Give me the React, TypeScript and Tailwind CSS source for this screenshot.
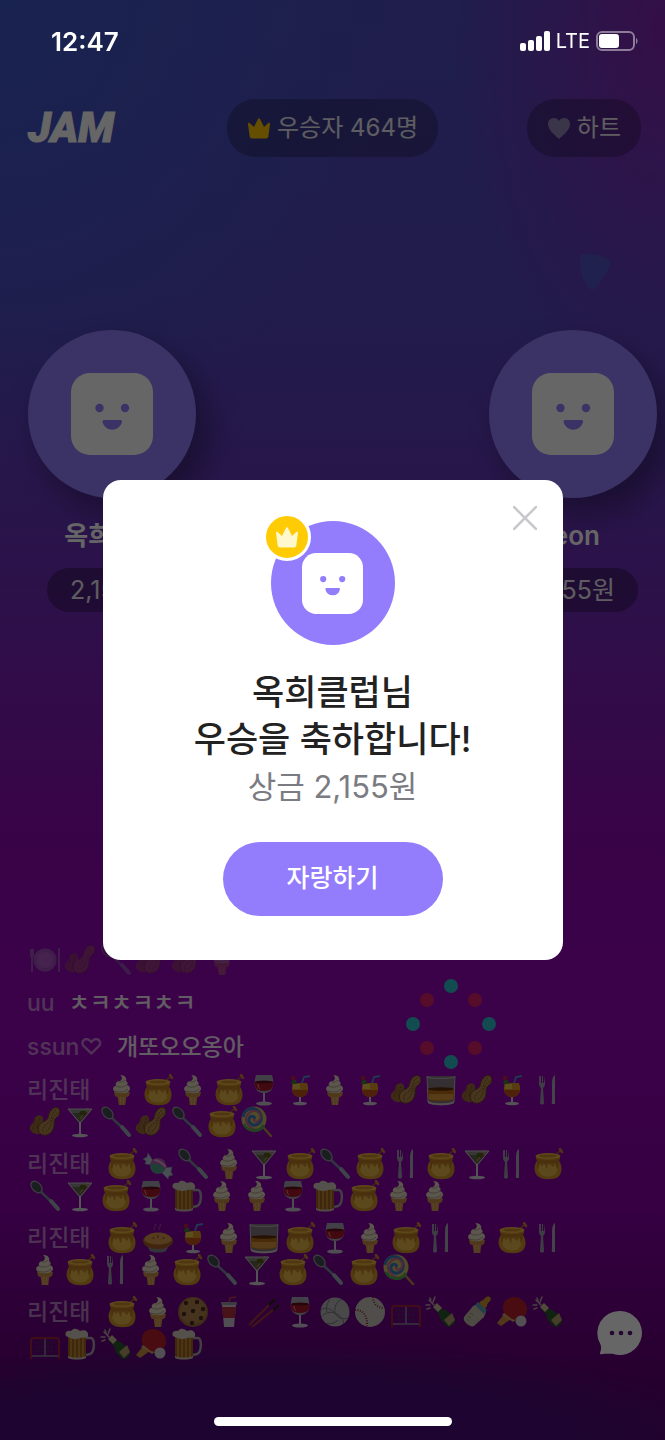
import type { ReactNode } from "react";
import { useState } from "react";

type chatType = {
  name: string;
  text?: string;
  lines?: string[][];
};

const chats: chatType[] = [
  { name: "uu", text: "ㅊㅋㅊㅋㅊㅋ" },
  { name: "ssun♡", text: "개또오오옹아" },
  {
    name: "리진태",
    lines: [
      ["cone", "honey", "cone", "honey", "wine", "tropical", "cone", "tropical", "peanut", "whisky", "peanut", "tropical", "cutlery"],
      ["peanut", "martini", "spoon", "peanut", "spoon", "honey", "lollipop"],
    ],
  },
  {
    name: "리진태",
    lines: [
      ["honey", "candy", "spoon", "cone", "martini", "honey", "spoon", "honey", "cutlery", "honey", "martini", "cutlery", "honey"],
      ["spoon", "martini", "honey", "wine", "beer", "cone", "cone", "wine", "beer", "honey", "cone", "cone"],
    ],
  },
  {
    name: "리진태",
    lines: [
      ["honey", "pie", "tropical", "cone", "whisky", "honey", "wine", "cone", "honey", "cutlery", "cone", "honey", "cutlery"],
      ["cone", "honey", "cutlery", "cone", "honey", "spoon", "martini", "honey", "spoon", "honey", "lollipop"],
    ],
  },
  {
    name: "리진태",
    lines: [
      ["honey", "cone", "cookie", "cup", "chopsticks", "wine", "volleyball", "baseball", "goal", "champagne", "bottle", "pingpong", "champagne"],
      ["goal", "beer", "champagne", "pingpong", "beer"],
    ],
  },
];

// every drawing sits on a 32 x 32 board
const emojis: Record<string, ReactNode> = {
  cone: (
    <>
      <path d="M11 19h10l-2 12h-6z" fill="#dba55c" />
      <path d="M8 18h16l-1 4-2 1H11l-2-1z" fill="#c98f47" />
      <path d="M13 20v11M16 20v11M19 20v11" stroke="#b47c38" strokeWidth=".6" />
      <path d="M8 17c-2-3 0-5 2-5-1-3 1-5 4-5 2-1 3-4 0-6 5 0 7 3 6 6 2 1 2 3 1 4 3 1 4 4 2 6-2 3-13 3-15 0z" fill="#e3dac2" />
      <path d="M10 12c4 2 8 1 11-1M12 7c2 2 5 1 7-1M9 17c5 2 10 1 13-2" stroke="#a99a7c" strokeWidth="1" fill="none" />
    </>
  ),
  honey: (
    <>
      <path d="M22 8l6-5" stroke="#a8672a" strokeWidth="1.500" strokeLinecap="round" />
      <path d="M28 1l2 3" stroke="#c9823a" strokeWidth="2.500" strokeLinecap="round" />
      <path d="M4 9c0 2 1 3 1 4-4 5-3 13 2 16 4 3 15 3 19 0 4-3 5-11 1-16 0-1 1-2 1-4z" fill="#cf952b" />
      <path d="M8 15c-3 4-2 10 2 12 3 2 9 2 12 0 4-2 4-8 2-12z" fill="#e8bd50" opacity=".85" />
      <path d="M4 10c5 3 19 3 24 0l-1 4c0 1-1 7-2 7s-1-5-2-5-1 3-2 3-2-3-4-3-1 5-2 5-2-5-3-5-1 2-2 2-1-2-2-2-1 5-2 5-1-6-1-7z" fill="#a8651c" opacity=".6" />
      <ellipse cx="16" cy="8" rx="12.500" ry="3" fill="#e9b545" />
      <ellipse cx="16" cy="8" rx="9" ry="1.600" fill="#c98a2c" />
    </>
  ),
  wine: (
    <>
      <path d="M8 1h16c3 10 1 18-8 18S5 11 8 1z" fill="#a3a0ae" />
      <path d="M7 8h18c1 6-2 9-9 9s-10-3-9-9z" fill="#a5182a" />
      <ellipse cx="16" cy="8" rx="9" ry="1.500" fill="#5f0d1c" />
      <path d="M16 19v10" stroke="#c9c3d3" strokeWidth="2" />
      <ellipse cx="16" cy="29.500" rx="8" ry="2" fill="#c9c3d3" />
      <path d="M10 10c0 3 1 4 2 5" stroke="#ec8a92" strokeWidth="1" fill="none" />
    </>
  ),
  tropical: (
    <>
      <path d="M18 9l2-6 6-1" stroke="#4d91d1" strokeWidth="1.800" fill="none" />
      <path d="M9 9h14c3 7 0 14-7 14S6 16 9 9z" fill="#dd9326" />
      <path d="M8 16c1 5 3 7 8 7s7-2 8-7z" fill="#c4531c" />
      <path d="M9 10h7v5H9z" fill="#e8c24a" />
      <path d="M7 9c0-3 3-4 5-3l1 4H8z" fill="#3f7a38" />
      <circle cx="9" cy="4" r="2.200" fill="#b9243c" />
      <path d="M16 23v6" stroke="#d8d2dc" strokeWidth="2" />
      <ellipse cx="16" cy="29.500" rx="7" ry="1.800" fill="#cfcbd6" />
    </>
  ),
  peanut: (
    <>
      <path d="M8 10c4-2 7 1 6 5-1 3 0 4 0 8 0 5-7 7-11 3-4-3-2-7 1-9 2-2 0-5 4-7z" fill="#9c6c36" />
      <path d="M25 2c5-2 7 3 5 7-2 3-5 3-5 7 1 9-5 14-11 13-5-1-6-7-3-11 3-3 6-2 8-6 1-4 2-8 6-10z" fill="#b5854c" stroke="#6d491f" strokeWidth="1" />
      <path d="M27 4c-6 4-3 9-8 13s-6 5-5 10M29 7c-5 3-6 7-7 11s-3 7-6 8M6 13c2 4-3 6-2 11M11 12c0 4-3 5-3 11" stroke="#765026" strokeWidth="1" strokeDasharray="2 1" fill="none" />
    </>
  ),
  whisky: (
    <>
      <path d="M2 2h28l-1 27c-3 3-23 3-26 0z" fill="#83767f" />
      <path d="M3 15h26v10c-3 3-23 3-26 0z" fill="#b96d18" />
      <path d="M4 20h24v5c-4 2-20 2-24 0z" fill="#d8973a" />
      <ellipse cx="16" cy="15" rx="13" ry="1.800" fill="#5f2d08" />
      <path d="M3 27c4 3 22 3 26 0v2c-4 3-22 3-26 0z" fill="#cfc3c6" />
      <path d="M2 3c3 2 25 2 28 0M2 2l1 26M30 2l-1 26" stroke="#bdb4bf" strokeWidth="1" fill="none" />
    </>
  ),
  cutlery: (
    <>
      <path d="M7 2v8c0 2 1 3 2 4l-1 15c0 2 4 2 4 0l-1-15c1-1 2-2 2-4V2l-1 7h-1V2h-1v7H9V2z" fill="#9a98a9" />
      <path d="M21 30c-2 0-1-2-1-5V9c0-4 1-7 3-8v29z" fill="#a9a7b6" />
    </>
  ),
  martini: (
    <>
      <path d="M4 3h24L17 17h-2z" fill="#8d8b86" />
      <path d="M7 7h18l-9 9z" fill="#5f6349" />
      <path d="M24 2l-8 11" stroke="#c98844" strokeWidth="1.200" />
      <ellipse cx="19" cy="7" rx="3.500" ry="2.300" fill="#466017" />
      <circle cx="20" cy="7" r="1" fill="#c12f22" />
      <path d="M4 3h24L16 17z" stroke="#c9c4cf" strokeWidth="1" fill="none" />
      <path d="M16 16v13" stroke="#d4cedb" strokeWidth="2" />
      <ellipse cx="16" cy="29.500" rx="8" ry="1.800" fill="#d4cedb" />
    </>
  ),
  spoon: (
    <>
      <path d="M12 12l16 15" stroke="#76879a" strokeWidth="2.500" strokeLinecap="round" />
      <path d="M22 21l7 8" stroke="#9dabba" strokeWidth="4" strokeLinecap="round" />
      <ellipse cx="7.500" cy="7" rx="5" ry="7.500" transform="rotate(-43 7.500 7)" fill="#9396a1" />
      <ellipse cx="7.500" cy="7" rx="3.800" ry="6" transform="rotate(-43 7.500 7)" fill="#434b54" />
    </>
  ),
  lollipop: (
    <>
      <path d="M21 20l9 10" stroke="#b98b4e" strokeWidth="2.500" strokeLinecap="round" />
      <circle cx="13" cy="13" r="12.500" fill="#c9bb68" />
      <path d="M13 13c2-3-4-4-5 0s4 8 9 5 4-11-1-14S3 3 2 11" stroke="#3f78be" strokeWidth="3" fill="none" />
      <path d="M13 13c-1 3 4 4 6 0s-2-9-7-8-9 7-6 12 8 8 13 6" stroke="#c9688c" strokeWidth="2" fill="none" />
      <path d="M3 18c3 7 15 10 20 1" stroke="#56a74e" strokeWidth="3" fill="none" />
    </>
  ),
  candy: (
    <>
      <path d="M12 14L6 5l-1 4-4 2 3 2-1 3 8 1zM21 20l9-1-1 5 2 3-4 1-1 3-7-7z" fill="#b7c4d2" stroke="#7786a2" strokeWidth=".7" />
      <circle cx="16" cy="18" r="8" fill="#a95fb2" />
      <path d="M8 18c4-5 11-2 15 3-3 7-14 6-15-3z" fill="#4f9f88" />
      <path d="M12 12c4 0 9 4 12 7" stroke="#ed9fd0" strokeWidth="2" fill="none" />
    </>
  ),
  beer: (
    <>
      <path d="M22 10h5c4 0 4 14-1 16l-4 1" stroke="#a69eac" strokeWidth="2.500" fill="none" />
      <path d="M4 7h18v22c-2 3-16 3-18 0z" fill="#9f621b" />
      <path d="M7 10v19M11 10v20M15 10v20M19 10v19" stroke="#c99344" strokeWidth="1.500" />
      <path d="M2 8c-2-4 2-6 5-5 3-4 7-2 9 0 5-2 9 1 8 5-1 3-5 1-8 2-4 2-9 1-14-2z" fill="#d3cbbd" />
      <path d="M4 28c4 2 14 2 18 0v2c-4 2-14 2-18 0z" fill="#c9bcae" />
    </>
  ),
  pie: (
    <>
      <path d="M3 20h26l-5 9c-3 2-13 2-16 0z" fill="#858392" />
      <ellipse cx="16" cy="19" rx="15" ry="8" fill="#a65d24" />
      <path d="M2 18c2-10 26-10 28 0-4 6-24 6-28 0z" fill="#d8964b" />
      <path d="M11 15l1 2M16 13v3M22 15l-1 2" stroke="#8a5226" strokeWidth="1.200" fill="none" />
      <path d="M13 8c-3-3 2-3 0-6M18 8c-3-3 2-3 0-6" stroke="#8a6a94" strokeWidth="1" fill="none" />
    </>
  ),
  cookie: (
    <>
      <circle cx="16" cy="16" r="15" fill="#9c6d3e" />
      <circle cx="16" cy="15" r="13" fill="#b07f4c" />
      {[[9, 7], [20, 6], [26, 13], [16, 15], [7, 18], [24, 22], [15, 27]].map(([x, y]) => (
        <circle key={x} cx={x} cy={y} r="2.200" fill="#4b2b1b" />
      ))}
    </>
  ),
  cup: (
    <>
      <path d="M16 7l1-5 6-1" stroke="#c2394a" strokeWidth="1.500" fill="none" />
      <path d="M9 8h14l-2 23H11z" fill="#c8c2cc" />
      <path d="M9 11h14l-1 11H10z" fill="#b32f3f" />
      <rect x="8" y="6" width="16" height="3" rx="1" fill="#9a94a2" />
    </>
  ),
  chopsticks: (
    <>
      <path d="M1 29L27 3M4 31L31 9" stroke="#a5383b" strokeWidth="2" />
      <path d="M21 9l6-6M25 14l6-5" stroke="#2a2024" strokeWidth="2.500" />
    </>
  ),
  volleyball: (
    <>
      <circle cx="16" cy="16" r="14.500" fill="#b8b6b9" />
      <path d="M16 17c-1-7 2-12 7-14M16 17c-6-2-10 0-14 4M16 17c2 5 8 7 13 5M11 3c-3 4-4 8-3 13M24 28c2-3-3-9-8-11M2 14c5-4 10-1 14 3M7 27c4 2 9 0 12-3" stroke="#77747d" strokeWidth="1" fill="none" />
    </>
  ),
  baseball: (
    <>
      <circle cx="16" cy="16" r="15" fill="#c5c2bc" />
      <path d="M19 1c0 7 5 11 11 11M1 14c8-1 13 7 12 16" stroke="#a02b37" strokeWidth="2" strokeDasharray="1 1.500" fill="none" />
    </>
  ),
  goal: (
    <>
      <path d="M9 11v17M13 11v17M19 11v17M23 11v17M4 15h24M4 19h24M4 23h24" stroke="#55306a" strokeWidth=".6" fill="none" />
      <path d="M16 11v17M3 28h26" stroke="#8d83a0" strokeWidth="1.500" />
      <path d="M2 31V13c0-2 1-3 3-3h22c2 0 3 1 3 3v18" stroke="#a4243c" strokeWidth="2" fill="none" />
    </>
  ),
  champagne: (
    <>
      <path d="M11 10l5 3c6 0 11 6 14 12 1 2-5 7-7 6-5-3-9-9-9-13l-5-5z" fill="#28552a" />
      <path d="M19 24l8-7 3 7-6 6z" fill="#b09a6b" />
      <path d="M8 11l4-4 5 5-4 4z" fill="#c9bc96" />
      <path d="M9 9L4 4M8 6l2-5M5 9H1M5 2l1 2M2 13l3-1" stroke="#b8a6a6" strokeWidth="1.500" strokeLinecap="round" />
    </>
  ),
  bottle: (
    <>
      <path d="M17 8l8 8-2 5-10 9c-3 2-12-4-10-9l9-11z" fill="#c3bbaa" />
      <path d="M17 6l9 8-3 4-9-9z" fill="#579fba" />
      <path d="M20 5c4-1 4-6 9-4 3 4-3 5-3 9l-2 3-6-6z" fill="#cb942f" />
      <path d="M9 17l3 2M7 20l3 2M6 23l2 2" stroke="#8d877b" strokeWidth="1" />
    </>
  ),
  pingpong: (
    <>
      <path d="M9 17l6 6-10 7-4-3z" fill="#c98d45" />
      <path d="M8 17C4 8 10 1 18 1s14 7 13 14-9 12-16 8z" fill="#b3202c" />
      <path d="M8 17l8 6 4 1-3 2-11-7z" fill="#d3a061" />
      <circle cx="25" cy="25" r="5.500" fill="#ccc9cf" />
    </>
  ),
  plate: (
    <>
      <circle cx="16" cy="16" r="11.500" fill="#b7b4bd" />
      <circle cx="16" cy="16" r="8" fill="#d8d5dc" />
      <path d="M2 5v8M4 5v8M3 12v16M30 4v24" stroke="#b7b4bd" strokeWidth="2" />
    </>
  ),
};

function Emoji({ name }: { name: string }) {
  return (
  <svg role="img" aria-label={name} viewBox="0 0 32 32" className="w-8 h-8 justify-self-center">
    {emojis[name]}
  </svg>
  )
}

function EmojiLine({ names }: { names: string[] }) {
  return (
  <div className="grid grid-cols-13 w-[461px] h-8">
    {names.map((name, idx) => (
      <Emoji key={idx} name={name} />
    ))}
  </div>
  )
}

function Face({ className }: { className: string }) {
  return (
  <svg viewBox="0 0 82 82" aria-hidden="true" className={className}>
    <rect width="82" height="82" rx="19" fill="#fff" />
    <circle cx="28.500" cy="35" r="4.200" fill="#937dfc" />
    <circle cx="54" cy="35" r="4.200" fill="#937dfc" />
    <path d="M33 47h16.500q2 0 1.500 2a10 10 0 0 1-19.500 0q-.5-2 1.500-2z" fill="#937dfc" />
  </svg>
  )
}

function Crown({ className }: { className: string }) {
  return (
  <svg viewBox="0 0 24 24" aria-hidden="true" className={className}>
    <path d="M1 8c-.3-1.500.8-1.700 1.600-.9L7 11l4-8c.4-1 1.600-1 2 0l4 8 4.400-3.900c.8-.8 1.900-.6 1.600.9l-1.700 12.500c-.2 1.300-.9 2-2.300 2H5c-1.400 0-2.100-.7-2.300-2z" fill="currentColor" />
  </svg>
  )
}

function StatusBar() {
  return (
  <div className="relative z-20 h-[82px] pl-[51px] pr-[26px] flex items-center justify-between text-white">
    <span className="text-[26px] font-semibold">12:47</span>
    <div className="flex items-center gap-[6px]">
      <svg viewBox="0 0 30 20" aria-label="Signal" className="w-[30px] h-5">
        <g fill="#fff">
          <rect x="0" y="12" width="6" height="8" rx="2" />
          <rect x="8" y="9" width="6" height="11" rx="2" />
          <rect x="16" y="5" width="6" height="15" rx="2" />
          <rect x="24" y="0" width="6" height="20" rx="2" />
        </g>
      </svg>
      <span className="text-[20px] leading-5">LTE</span>
      <svg viewBox="0 0 43 20" aria-label="Battery" className="w-[43px] h-5">
        <rect x="1" y="1" width="37" height="18" rx="5" fill="none" stroke="#fff" strokeOpacity=".45" strokeWidth="2" />
        <rect x="3" y="3" width="20" height="14" rx="3" fill="#fff" />
        <path d="M40 7c2 1 2 5 0 6z" fill="#fff" opacity=".45" />
      </svg>
    </div>
  </div>
  )
}

function Winner({ name, prize }: { name: string; prize: string }) {
  return (
  <div className="flex flex-col items-center w-[168px]">
    <div className="w-[168px] h-[168px] rounded-full bg-[#937dfc] flex items-center justify-center shadow-[12px_16px_32px_rgba(0,0,0,0.35)]">
      <Face className="w-[82px] h-[82px]" />
    </div>
    <p className="mt-5 h-9 leading-9 text-[26px] font-semibold text-white">{name}</p>
    <p className="mt-[14px] w-[130px] h-11 leading-11 text-center text-[25px] text-white/90 rounded-full bg-black/30">{prize}</p>
  </div>
  )
}

function WinnerDialog({ onClose }: { onClose: () => void }) {
  return (
  <div className="fixed inset-0 z-10 bg-black/60 flex items-center justify-center">
    <div
    role="dialog"
    aria-modal="true"
    aria-labelledby="winner-title"
    className="relative w-[460px] pt-[41px] pb-[44px] rounded-[18px] bg-white flex flex-col items-center">
      <button
      aria-label="닫기"
      onClick={onClose}
      className="absolute top-6 right-6 w-7 h-7 flex items-center justify-center">
        <svg viewBox="0 0 24 24" className="w-6 h-6">
          <path d="M1 1l22 22M23 1L1 23" stroke="#c9c9cd" strokeWidth="2.500" strokeLinecap="round" />
        </svg>
      </button>
      <div className="relative w-[124px] h-[124px] rounded-full bg-[#937dfc] flex items-center justify-center">
        <Face className="w-[61px] h-[61px]" />
        <span className="absolute -top-2 -left-2 w-12 h-12 rounded-full border-[3px] border-white bg-[#ffcb05] text-[#fff8cc] flex items-center justify-center">
          <Crown className="w-6 h-6" />
        </span>
      </div>
      <h1 id="winner-title" className="mt-6 text-center text-[35px] leading-[47px] font-medium text-[#222]">
        옥희클럽님<br />우승을 축하합니다!
      </h1>
      <p className="text-[31px] leading-[47px] text-[#7b7b82]">상금 2,155원</p>
      <button className="mt-8 w-[220px] h-[74px] rounded-full bg-[#937dfc] text-white text-[25px] font-medium">
        자랑하기
      </button>
    </div>
  </div>
  )
}

export default function App() {
  const [open, setOpen] = useState<boolean>(true);

  return (
  <div className="relative min-h-screen overflow-hidden flex flex-col font-['Inter','Noto_Sans_CJK_KR',sans-serif] bg-[radial-gradient(ellipse_75%_7%_at_40%_100%,#4b0e7a_60%,transparent_100%),radial-gradient(ellipse_32%_26%_at_100%_2%,#8325b2,transparent),radial-gradient(ellipse_60%_32%_at_0%_0%,#4058c8,transparent),linear-gradient(180deg,#4e4cbe_0%,#5446be_22%,#6437ba_34%,#7328b6_43%,#9009b4_58%,#9404b6_72%,#8700a5_84%,#5f0073_96%)]">
    <StatusBar />
    <header className="px-6 mt-[17px] grid grid-cols-[1fr_auto_1fr] items-center text-white">
      <span className="pl-1 font-['Roboto'] text-[42px] leading-[58px] font-black italic [-webkit-text-stroke:1px_white]">JAM</span>
      <div className="h-[58px] px-5 rounded-[28px] bg-black/25 flex items-center gap-[6px] text-[24px] text-white/90">
        <Crown className="w-6 h-6 text-[#ffc400]" />
        우승자 464명
      </div>
      <button className="justify-self-end h-[58px] px-5 rounded-[28px] bg-black/25 flex items-center gap-[6px] text-[24px] text-white/90">
        <svg viewBox="0 0 24 24" aria-hidden="true" className="w-6 h-6">
          <path d="M12 23C7 18 1 14 1 8c0-4 3-6 6-6 2 0 4 1 5 3 1-2 3-3 5-3 3 0 6 2 6 6 0 6-6 10-11 15z" fill="#9384b8" />
        </svg>
        하트
      </button>
    </header>

    <svg viewBox="0 0 40 40" aria-hidden="true" className="absolute top-[251px] right-[50px] w-10 h-10">
      <path d="M5 4c12-2 22 0 29 5 3 3 1 8-3 13-5 7-9 17-15 16C9 35 4 15 5 4z" fill="#4a64c8" opacity=".6" />
    </svg>
    <svg viewBox="0 0 92 92" aria-hidden="true" className="absolute top-[978px] left-[405px] w-[92px] h-[92px]">
      <g fill="#2fbcc8">
        <circle cx="46" cy="8" r="7" />
        <circle cx="84" cy="46" r="7" />
        <circle cx="46" cy="84" r="7" />
        <circle cx="8" cy="46" r="7" />
      </g>
      <g fill="#e82a58" opacity=".8">
        <circle cx="22" cy="22" r="7" />
        <circle cx="70" cy="22" r="7" />
        <circle cx="70" cy="70" r="7" />
        <circle cx="22" cy="70" r="7" />
      </g>
    </svg>

    <section className="mt-[173px] pl-7 pr-2 flex justify-between">
      <Winner name="옥희클럽" prize="2,155원" />
      <Winner name="jeon" prize="2,155원" />
    </section>

    <section className="mt-auto pl-[27px] pr-[22px] pb-[80px] flex items-end justify-between">
      <ul className="flex flex-col gap-[10px] text-[23px] font-medium text-white">
        <li className="opacity-40">
          <EmojiLine names={["plate", "peanut", "spoon", "peanut", "peanut", "cone"]} />
        </li>
        {chats.map((chat, idx) => (
          <li key={idx}>
            <div className="flex items-center gap-[14px]">
              <span className="leading-8 text-white/50">{chat.name}</span>
              {chat.text && <span className="leading-[34px] text-white/90">{chat.text}</span>}
              {chat.lines && <EmojiLine names={chat.lines[0]} />}
            </div>
            {chat.lines && <EmojiLine names={chat.lines[1]} />}
          </li>
        ))}
      </ul>
      <button aria-label="채팅" className="mb-1">
        <svg viewBox="0 0 46 46" className="w-[46px] h-[46px]">
          <path d="M23 1a22 22 0 1 1-7.500 42.700c-4 .3-7-.2-11 .6-1.200.2-1.700-.5-1.400-1.600.8-3 1.500-5 .4-8.200A22 22 0 0 1 23 1z" fill="#fff" />
          <g fill="#5b1078">
            <circle cx="15" cy="23" r="2.300" />
            <circle cx="24" cy="23" r="2.300" />
            <circle cx="33" cy="23" r="2.300" />
          </g>
        </svg>
      </button>
    </section>

    <div className="absolute z-20 bottom-[14px] inset-x-0 mx-auto w-[238px] h-[9px] rounded-full bg-white" />
    {open && <WinnerDialog onClose={() => setOpen(false)} />}
  </div>
  )
}
